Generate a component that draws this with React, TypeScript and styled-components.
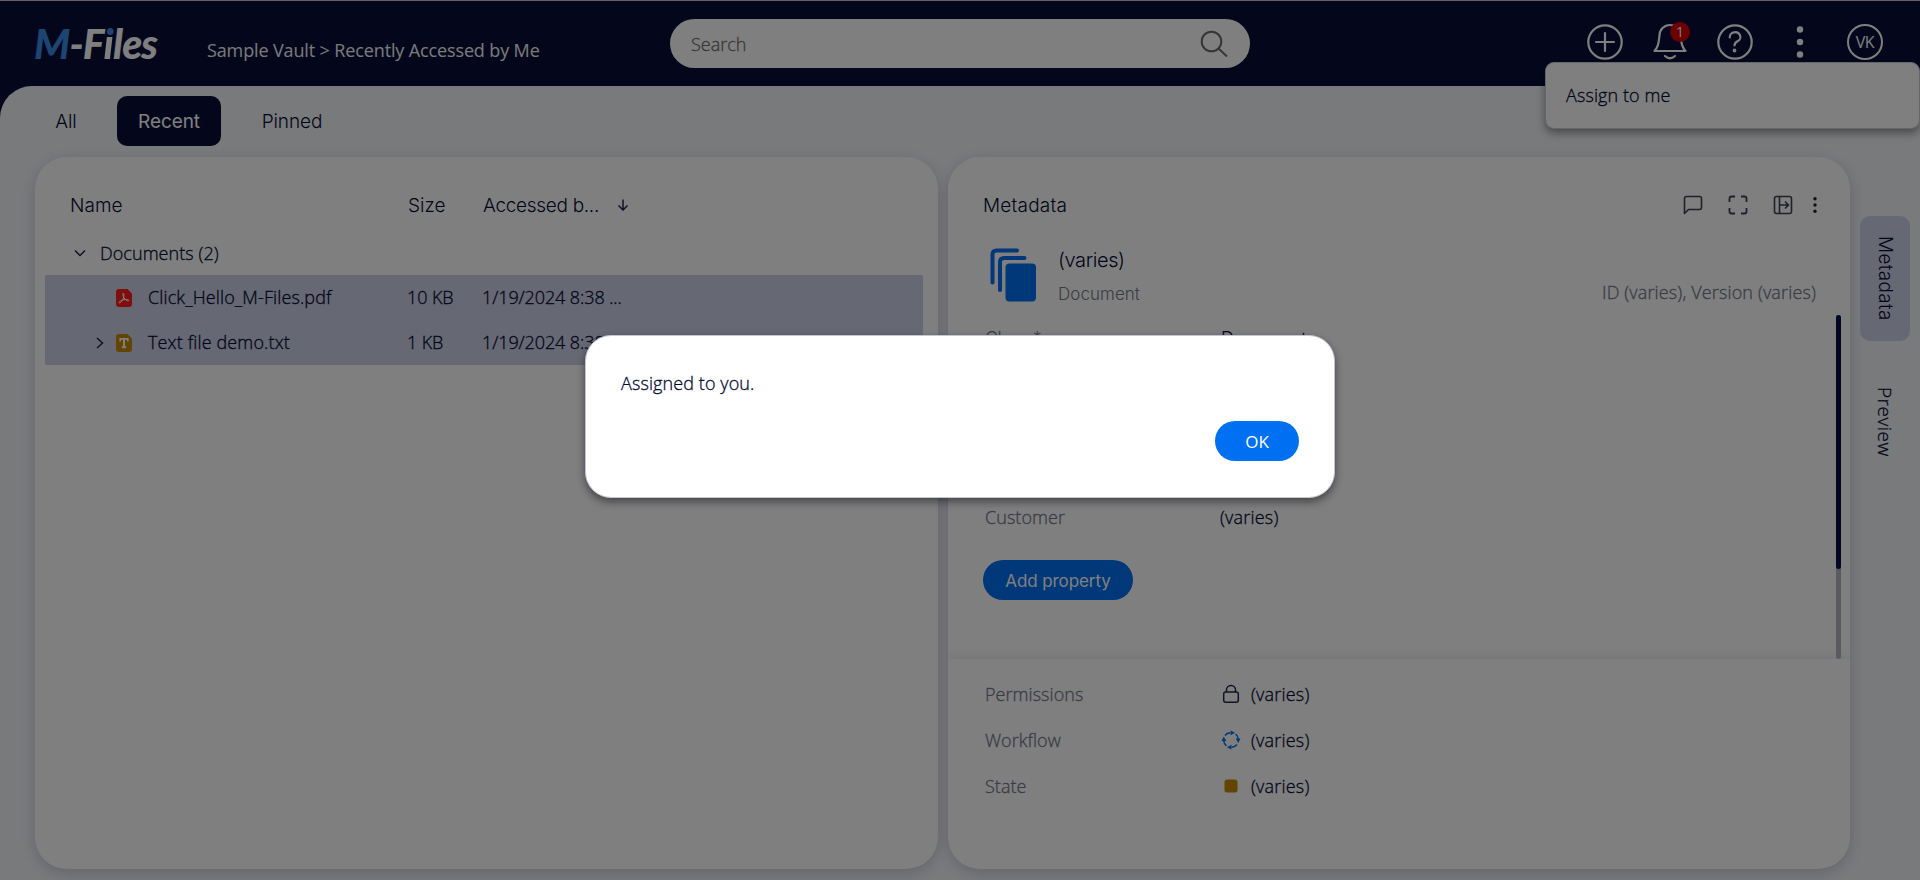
import React from "react";
import styled, { createGlobalStyle } from "styled-components";

const Global = createGlobalStyle`
  * { box-sizing: border-box; }
  body { margin: 0; background: #0a1039; }
`;

const ui = `"Open Sans", sans-serif`;
const display = `Inter, "Open Sans", sans-serif`;

const Txt = styled.span<{ $w?: number; $size?: number; $color?: string; $brand?: boolean; $track?: number }>`
  display: block;
  flex: none;
  width: ${(p) => (p.$w ? `${p.$w}px` : "auto")};
  white-space: nowrap;
  font-family: ${(p) => (p.$brand ? display : ui)};
  font-size: ${(p) => p.$size ?? 18}px;
  font-weight: 300;
  letter-spacing: ${(p) => p.$track ?? 0.05}px;
  color: ${(p) => p.$color ?? "#060b35"};
  -webkit-text-stroke: ${(p) => (p.$brand ? 0 : 0.3)}px currentColor;
`;

const App = styled.div`
  position: relative;
  display: flex;
  flex-direction: column;
  width: 1920px;
  height: 880px;
  overflow: hidden;
  background: #080f38;
  border-top: 1px solid #626262;
`;

const Header = styled.header`
  display: flex;
  align-items: flex-start;
  height: 85px;
  flex: none;
`;

const Logo = styled.div`
  width: 172px;
  padding: 18px 0 0 34px;
  font: italic 900 41px/50px Lato, sans-serif;
  letter-spacing: -0.9px;
  white-space: nowrap;
  color: #fff;
  b { font-weight: 900; color: #3a8be4; }
`;

const TwoToneLetter = styled.span`
  padding: 0 4px;
  margin: 0 -4px;
  background: linear-gradient(#3a8be4 18px, #fff 18px);
  -webkit-background-clip: text;
  background-clip: text;
  color: transparent;
`;

const Crumbs = styled.div`
  width: 498px;
  padding: 37px 0 0 35px;
  font: 400 18px/25px ${ui};
  letter-spacing: -0.13px;
  color: #f4f4f4;
`;

const Search = styled.div`
  display: flex;
  align-items: center;
  justify-content: space-between;
  width: 580px;
  height: 49px;
  margin-top: 18px;
  padding: 0 22px 0 21px;
  border-radius: 25px;
  background: #fff;
`;

const HeaderIcons = styled.div`
  display: flex;
  gap: 25px;
  padding: 21px 0 0 335px;
`;

const IconSlot = styled.div`
  position: relative;
  width: 40px;
  height: 40px;
`;

const Badge = styled.span`
  position: absolute;
  left: 20px;
  top: 0;
  width: 20px;
  height: 20px;
  border-radius: 50%;
  background: #d80000;
  color: #fff;
  text-align: center;
  font: 400 14px/20px ${ui};
`;

const Avatar = styled.div`
  width: 36px;
  height: 36px;
  margin: 2px 0 0 2px;
  border: 2px solid #fff;
  border-radius: 50%;
  color: #fff;
  text-align: center;
  letter-spacing: -0.5px;
  font: 400 16px/32px ${ui};
`;

const Body = styled.main`
  display: flex;
  flex-direction: column;
  flex: 1;
  border-top-left-radius: 32px;
  background: #f2f4f8;
`;

const Tabs = styled.nav`
  display: flex;
  flex: none;
  height: 71px;
  padding: 10px 0 0 35px;
`;

const Tab = styled.div<{ $active?: boolean; $w: number }>`
  height: 50px;
  width: ${(p) => p.$w}px;
  margin-right: ${(p) => (p.$active ? 0 : 20)}px;
  border-radius: 10px;
  text-align: center;
  font: ${(p) => (p.$active ? 400 : 300)} 19px/51px ${display};
  letter-spacing: -0.1px;
  background: ${(p) => (p.$active ? "#080f38" : "transparent")};
  color: ${(p) => (p.$active ? "#fff" : "#060b35")};
`;

const Columns = styled.div`
  display: flex;
  gap: 10px;
  padding-left: 35px;
`;

const Card = styled.section<{ $w: number }>`
  flex: none;
  width: ${(p) => p.$w}px;
  height: 712px;
  border-radius: 32px;
  background: #fff;
  box-shadow: 0 4px 14px rgba(30, 40, 90, 0.2);
  overflow: hidden;
`;

const ListHead = styled.div`
  display: flex;
  align-items: center;
  height: 82px;
  padding: 14px 0 0 35px;
`;

const GroupRow = styled.div`
  display: flex;
  align-items: center;
  height: 28px;
  margin-bottom: 8px;
  padding-left: 39px;
`;

const FileRow = styled.div`
  display: flex;
  align-items: center;
  width: 878px;
  height: 45px;
  margin-left: 10px;
  padding-left: 45px;
  background: #ccd0e8;
  ${Txt} { padding-bottom: 2px; }
`;

const Glyph = styled.span<{ $w: number; $inset?: number }>`
  display: flex;
  flex: none;
  width: ${(p) => p.$w}px;
  padding-left: ${(p) => p.$inset ?? 0}px;
`;

const MetaHead = styled.div`
  display: flex;
  align-items: center;
  justify-content: space-between;
  height: 89px;
  padding: 8px 32px 0 35px;
`;

const Tools = styled.div`
  display: flex;
  align-items: center;
  gap: 25px;
  padding-bottom: 1px;
  svg:last-child { margin-left: -6px; }
`;

const ObjectInfo = styled.div`
  display: flex;
  height: 69px;
  padding: 2px 34px 0 42px;
`;

const ObjectText = styled.div`
  display: flex;
  flex-direction: column;
  flex: 1;
  gap: 10px;
  padding-left: 21px;
  line-height: 24px;
`;

const Version = styled.div`
  padding-top: 32px;
`;

const Props = styled.div`
  position: relative;
  height: 344px;
  padding: 1px 0 0 37px;
`;

const PropRow = styled.div<{ $h: number; $before?: number }>`
  display: flex;
  align-items: center;
  height: ${(p) => p.$h}px;
  margin-top: ${(p) => p.$before ?? 0}px;
`;

const AddButton = styled.div`
  width: 150px;
  height: 40px;
  margin: 21px 0 0 -2px;
  border-radius: 20px;
  background: #0070f2;
  color: #fff;
  text-align: center;
  font: 400 17px/42px ${display};
  letter-spacing: -0.1px;
`;

const Scroll = styled.div`
  position: absolute;
  right: 9px;
  top: 0;
  width: 5px;
  height: 344px;
  border-radius: 3px;
  background: #b5b7c2;
`;

const Thumb = styled.div`
  height: 254px;
  border-radius: 3px;
  background: #080f46;
`;

const MetaFoot = styled.div`
  height: 210px;
  padding: 12px 0 0 37px;
  box-shadow: 0 0 12px rgba(30, 40, 90, 0.14);
`;

const SideTabs = styled.div`
  padding-top: 59px;
`;

const SideTab = styled.div<{ $active?: boolean }>`
  display: flex;
  align-items: center;
  justify-content: center;
  width: 50px;
  height: ${(p) => (p.$active ? 125 : 162)}px;
  border-radius: 10px;
  background: ${(p) => (p.$active ? "#ccd0e8" : "transparent")};
  writing-mode: vertical-rl;
  ${Txt} { width: auto; }
`;

const Menu = styled.div`
  position: absolute;
  left: 1545px;
  top: 61px;
  width: 375px;
  height: 67px;
  padding: 20px;
  border: 1px solid #c9c9d6;
  border-radius: 9px;
  background: #fff;
  box-shadow: 0 4px 8px rgba(0, 0, 0, 0.4);
`;

const Overlay = styled.div`
  position: absolute;
  inset: -1px 0 0 0;
  background: rgba(0, 0, 0, 0.5);
`;

const Dialog = styled.div`
  position: absolute;
  left: 585px;
  top: 334px;
  width: 750px;
  height: 163px;
  display: flex;
  flex-direction: column;
  padding: 35px;
  border: 1px solid #c4c5d6;
  border-radius: 26px;
  background: #fff;
  box-shadow: 0 4px 8px rgba(0, 0, 0, 0.45);
`;

const OkButton = styled.div`
  align-self: flex-end;
  flex: none;
  width: 84px;
  height: 40px;
  margin-top: 26px;
  border-radius: 20px;
  background: #0070f2;
  color: #fff;
  text-align: center;
  font: 500 17px/41px ${ui};
`;

const FileBadge = ({ color, children }: { color: string; children: React.ReactNode }) => (
  <svg width="16" height="18">
    <path d="M3 0H11.500L16 4.500V15Q16 18 13 18H3Q0 18 0 15V3Q0 0 3 0Z" fill={color} />
    {children}
  </svg>
);

const PdfIcon = () => (
  <FileBadge color="#ff1c1c">
    <path d="M7.200 4.200C8.600 4.200 7.800 8 7 10C6 12.500 4 14.500 3.200 13.700C2.700 12.500 6 10.800 9 10.500C12 10.200 13.200 11 12.700 11.700C11.800 12.600 9.200 10.800 8 8.800C7 7 6.400 4.600 7.200 4.200Z" stroke="#fff" fill="none" />
  </FileBadge>
);

const TextIcon = () => (
  <FileBadge color="#c48a00">
    <path d="M4.200 7.500V4.900H11.800V7.500" stroke="#fff" strokeWidth="1.600" fill="none" />
    <path d="M8 5V13.500M5.800 13.300H10.200" stroke="#fff" strokeWidth="2" fill="none" />
  </FileBadge>
);

const LockIcon = () => (
  <svg width="20" height="20" fill="none" stroke="#20264e" strokeWidth="1.500">
    <rect x="2.700" y="8" width="14.600" height="10.300" rx="2" />
    <path d="M5.500 8V6A4.500 4.500 0 0 1 14.500 6V8" />
  </svg>
);

const WorkflowIcon = () => (
  <svg width="20" height="20" fill="none" stroke="#0070f2" strokeWidth="1.500">
    <path d="M4 5.500Q6 3 9 2.800M14.500 4Q17 6 17.200 9M16 14.500Q14 17 11 17.200M5.500 16Q3 14 2.800 11" />
    <g fill="#0070f2" stroke="none">
      <path d="M9.500 0.500L14 2.800L9.500 5.300Z" />
      <path d="M19.500 8.500L17.200 13L14.700 8.500Z" />
      <path d="M10.500 19.500L6 17.200L10.500 14.700Z" />
      <path d="M0.500 11L2.800 6.500L5.300 11Z" />
    </g>
  </svg>
);

const StateIcon = () => (
  <svg width="20" height="20"><rect x="3.500" y="3.500" width="13" height="13" rx="2.500" fill="#c48a00" /></svg>
);

const grey = "#74788c";

const FootField = ({ name, icon }: { name: string; icon: React.ReactNode }) => (
  <PropRow $h={46}>
    <Txt $w={236} $color={grey}>{name}</Txt>
    <Glyph $w={30}>{icon}</Glyph>
    <Txt $track={0.2}>(varies)</Txt>
  </PropRow>
);

export default function MFiles() {
  return (
    <>
      <Global />
      <App>
        <Header>
          <Logo><b>M</b>-F<TwoToneLetter>i</TwoToneLetter>les</Logo>
          <Crumbs>Sample Vault &gt; Recently Accessed by Me</Crumbs>
          <Search>
            <Txt $color="#6f6f6f" $track={0}>Search</Txt>
            <svg width="28" height="28" viewBox="0 0 28 28" fill="none" stroke="#6b6b6b" strokeWidth="2">
              <circle cx="11.5" cy="11.5" r="9.8" /><path d="M18.5 18.5L27 26.5" />
            </svg>
          </Search>
          <HeaderIcons>
            <IconSlot>
              <svg width="40" height="40" fill="none" stroke="#fff" strokeWidth="2.200" strokeLinecap="round"><circle cx="20" cy="20" r="16.700" /><path d="M20 11v18M11 20h18" /></svg>
            </IconSlot>
            <IconSlot>
              <svg width="40" height="40" fill="none" stroke="#fff" strokeWidth="2.200" strokeLinecap="round" strokeLinejoin="round"><path d="M4.500 29H35.500C31.500 24.500 31.500 21 30.500 13.500A10.500 10.500 0 0 0 9.500 13.500C8.500 21 8.500 24.500 4.500 29ZM15 34Q20 38.500 25 34" /></svg>
              <Badge>1</Badge>
            </IconSlot>
            <IconSlot>
              <svg width="40" height="40" fill="none" stroke="#fff" strokeWidth="2.200" strokeLinecap="round"><circle cx="20" cy="20" r="16.700" /><path d="M14.800 15.500A5.300 4.800 0 1 1 22.500 19.300Q19.500 21 19.500 23.500" /><circle cx="19.500" cy="28.500" r="0.800" /></svg>
            </IconSlot>
            <IconSlot>
              <svg width="40" height="40" fill="#fff"><circle cx="20" cy="7.500" r="3.200" /><circle cx="20" cy="20" r="3.200" /><circle cx="20" cy="32.500" r="3.200" /></svg>
            </IconSlot>
            <Avatar>VK</Avatar>
          </HeaderIcons>
        </Header>
        <Body>
          <Tabs>
            <Tab $w={62}>All</Tab>
            <Tab $w={104} $active>Recent</Tab>
            <Tab $w={142}>Pinned</Tab>
          </Tabs>
          <Columns>
            <Card $w={903}>
              <ListHead>
                <Txt $w={338} $brand $size={19}>Name</Txt>
                <Txt $w={75} $brand $size={19}>Size</Txt>
                <Txt $w={134} $brand $size={19} $track={-0.3}>Accessed b...</Txt>
                <svg width="12" height="12" fill="none" stroke="#20264e" strokeWidth="1.500"><path d="M6 0.500V11M1.500 6.500L6 11L10.500 6.500" /></svg>
              </ListHead>
              <GroupRow>
                <Glyph $w={26}><svg width="12" height="12" fill="none" stroke="#20264e" strokeWidth="1.500"><path d="M1 3.500L6 8.500L11 3.500" /></svg></Glyph>
                <Txt>Documents (2)</Txt>
              </GroupRow>
              <FileRow>
                <Glyph $w={26} />
                <Glyph $w={32}><PdfIcon /></Glyph>
                <Txt $w={259} $track={0.12}>Click_Hello_M-Files.pdf</Txt>
                <Txt $w={75} $track={-0.1}>10 KB</Txt>
                <Txt $track={-0.1}>1/19/2024 8:38 ...</Txt>
              </FileRow>
              <FileRow>
                <Glyph $w={26} $inset={6}><svg width="8" height="14" fill="none" stroke="#20264e" strokeWidth="1.500"><path d="M1 2L6.500 7L1 12" /></svg></Glyph>
                <Glyph $w={32}><TextIcon /></Glyph>
                <Txt $w={259} $track={0.14}>Text file demo.txt</Txt>
                <Txt $w={75} $track={-0.1}>1 KB</Txt>
                <Txt $track={-0.1}>1/19/2024 8:38 ...</Txt>
              </FileRow>
            </Card>
            <Card $w={902}>
              <MetaHead>
                <Txt $brand $size={19} $track={0.2}>Metadata</Txt>
                <Tools>
                  <svg width="20" height="20" fill="none" stroke="#3e4150" strokeWidth="1.600" strokeLinejoin="round"><path d="M1.500 18.500V3.500Q1.500 1.500 3.500 1.500H16.500Q18.500 1.500 18.500 3.500V12.500Q18.500 14.500 16.500 14.500H5.500Z" /></svg>
                  <svg width="20" height="20" fill="none" stroke="#3e4150" strokeWidth="1.800"><path d="M1.500 7V3.500Q1.500 1.500 3.500 1.500H7M13 1.500H16.500Q18.500 1.500 18.500 3.500V7M18.500 13V16.500Q18.500 18.500 16.500 18.500H13M7 18.500H3.500Q1.500 18.500 1.500 16.500V13" /></svg>
                  <svg width="20" height="20" fill="none" stroke="#3e4150" strokeWidth="1.600"><rect x="1.500" y="1.500" width="17" height="17" rx="2" /><path d="M6.500 1.500V18.500M6.500 10H15M12 6.500L15.500 10L12 13.500" /></svg>
                  <svg width="6" height="20" fill="#20222e"><circle cx="3" cy="3.700" r="1.700" /><circle cx="3" cy="10" r="1.700" /><circle cx="3" cy="16.300" r="1.700" /></svg>
                </Tools>
              </MetaHead>
              <ObjectInfo>
                <svg width="47" height="55" fill="none" stroke="#0070f2" strokeWidth="4" strokeLinecap="round">
                  <path d="M2.500 34.500V6.500Q2.500 2.500 6.500 2.500H27M10 42V14Q10 10 14 10H34.500" />
                  <rect x="15.500" y="15.500" width="30.500" height="38" rx="4" fill="#0070f2" stroke="none" />
                </svg>
                <ObjectText>
                  <Txt $brand $size={20} $track={-0.4}>(varies)</Txt>
                  <Txt $brand $size={17} $color={grey}>Document</Txt>
                </ObjectText>
                <Version><Txt $color={grey} $track={0.14}>ID (varies), Version (varies)</Txt></Version>
              </ObjectInfo>
              <Props>
                <PropRow $h={45}>
                  <Txt $w={236} $brand $size={18} $color={grey} $track={-0.5}>Class *</Txt>
                  <Txt $brand $size={18} $track={-0.1}>Document</Txt>
                </PropRow>
                <PropRow $h={45} $before={133}>
                  <Txt $w={235} $color={grey}>Customer</Txt>
                  <Txt $track={0.2}>(varies)</Txt>
                </PropRow>
                <AddButton>Add property</AddButton>
                <Scroll><Thumb /></Scroll>
              </Props>
              <MetaFoot>
                <FootField name="Permissions" icon={<LockIcon />} />
                <FootField name="Workflow" icon={<WorkflowIcon />} />
                <FootField name="State" icon={<StateIcon />} />
              </MetaFoot>
            </Card>
            <SideTabs>
              <SideTab $active><Txt $brand $size={19} $track={0.3}>Metadata</Txt></SideTab>
              <SideTab><Txt $size={19} $track={0.5}>Preview</Txt></SideTab>
            </SideTabs>
          </Columns>
        </Body>
        <Menu><Txt $track={0.1}>Assign to me</Txt></Menu>
        <Overlay />
        <Dialog><Txt $track={0.1}>Assigned to you.</Txt><OkButton>OK</OkButton></Dialog>
      </App>
    </>
  );
}
